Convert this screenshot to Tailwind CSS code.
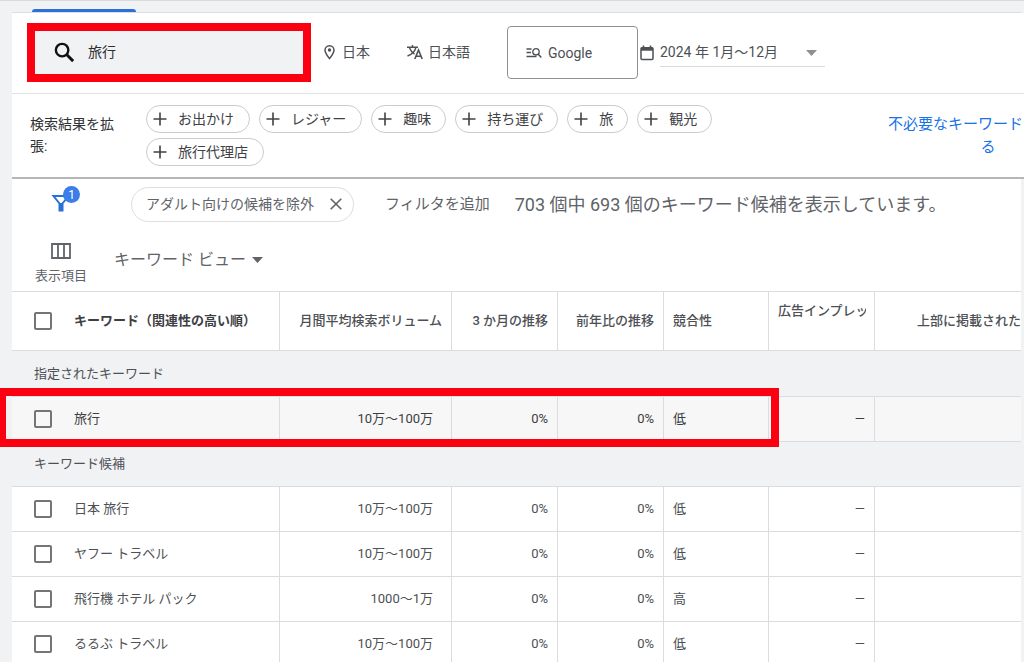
<!DOCTYPE html>
<html lang="ja">
<head>
<meta charset="utf-8">
<meta name="viewport" content="width=device-width, initial-scale=1">
<title>キーワード プランナー</title>
<script src="https://cdn.jsdelivr.net/npm/@tailwindcss/browser@4"></script>
</head>
<body class="h-screen overflow-hidden bg-[#f1f2f4] font-[Roboto,'Noto_Sans_CJK_JP',sans-serif] text-sm text-[#4d5054]">
<div class="flex min-h-full flex-col border-t border-[#d8dadd] pl-3 pr-[3px]">
  <div class="flex h-3 items-end border-b border-[#dcdee1] pl-5">
    <div class="h-[3px] w-[104px] rounded-t bg-[#2b70d8]"></div>
  </div>

  <!-- Search conditions -->
  <header class="-mr-[3px] flex h-[81px] items-center border-b border-[#dfe1e4] bg-white pb-px pl-[15px]">
    <form class="flex h-[59px] w-[284px] shrink-0 items-center gap-3 border-8 border-[#fb0010] bg-[#f1f2f4] pb-px pl-[18px]">
      <svg class="size-[23px] text-[#111]" viewBox="0 0 24 24" fill="none" stroke="currentColor" stroke-width="2.5" aria-hidden="true"><circle cx="9.500" cy="9.500" r="6.500"/><path d="M14.200 14.200 21 21" stroke-width="3"/></svg>
      <input type="text" aria-label="キーワード" value="旅行" class="w-40 min-w-0 bg-transparent text-[#2b2d30] outline-none">
    </form>
    <button type="button" class="ml-3 flex shrink-0 items-center gap-1.5 pb-px">
      <svg class="h-4 w-[13px]" viewBox="0 0 13 16" fill="none" stroke="currentColor" stroke-width="1.500" aria-hidden="true"><path d="M6.500 14.600C4 11.400 2 9 2 6.200a4.500 4.500 0 0 1 9 0c0 2.800-2 5.200-4.500 8.400Z"/><circle cx="6.500" cy="6" r="1.700" fill="currentColor" stroke="none"/></svg>
      日本
    </button>
    <button type="button" class="ml-9 flex shrink-0 items-center gap-1 pb-px">
      <svg class="h-4 w-[18px]" viewBox="0 0 18 16" fill="none" stroke="currentColor" stroke-width="1.400" aria-hidden="true"><path d="M1 3.200h11M6.500 1v2.200M10 3.200C9 7 5.500 10.500 1.500 12M3.300 3.500C4.500 6.500 6 8.500 8.500 10.200"/><path d="m8.800 15 3.700-9 3.700 9M10 12.200h5" stroke-width="1.600"/></svg>
      日本語
    </button>
    <button type="button" class="ml-[37px] flex h-[53px] w-[131px] shrink-0 items-center gap-1.5 rounded border border-[#8d9195] pl-[18px]">
      <svg class="h-3 w-4 shrink-0" viewBox="0 0 16 12" fill="none" stroke="currentColor" stroke-width="1.300" aria-hidden="true"><path d="M0.500 2h5M0.500 5.500h4.500M0.500 9.500h10"/><circle cx="10" cy="4.800" r="3.200"/><path d="m12.300 7.200 3 3.300" stroke-width="1.500"/></svg>
      Google
    </button>
    <svg class="ml-0.5 h-4 w-[14px] shrink-0" viewBox="0 0 14 16" fill="none" stroke="currentColor" aria-hidden="true"><rect x="1" y="2.800" width="12" height="11.700" rx="1" stroke-width="1.500"/><path d="M1 4.200h12" stroke-width="3"/><path d="M3.500 0.500v3M10.500 0.500v3" stroke-width="1.600"/></svg>
    <div class="relative ml-1.5 w-[165px] shrink-0 border-b border-[#d9dbde]">
      <select aria-label="期間" class="h-7 w-full appearance-none bg-transparent outline-none"><option>2024 年 1月〜12月</option></select>
      <svg class="pointer-events-none absolute right-2 top-3 h-[6px] w-[11px]" viewBox="0 0 11 6" fill="#8d9093" aria-hidden="true"><path d="M0 0h11L5.500 6z"/></svg>
    </div>
  </header>

  <!-- Suggested broader terms -->
  <section class="-mr-[3px] flex h-[85px] items-start overflow-hidden border-b-2 border-[#b5b6b8] bg-white pl-[18px] pt-[11px]">
    <p class="mt-2 w-[88px] shrink-0 leading-[22px] text-[#2f3134]">検索結果を拡張:</p>
    <div class="ml-7 flex w-[660px] shrink-0 flex-wrap gap-x-[9px] gap-y-[5px] text-[#3f4246]">
      <button type="button" class="flex h-7 items-center gap-[11px] rounded-full border border-[#c9cbce] pb-px pl-1.5 pr-[15px]"><svg class="size-3.5" viewBox="0 0 14 14" stroke="currentColor" stroke-width="1.600" aria-hidden="true"><path d="M7 .5v13M.5 7h13"/></svg>お出かけ</button>
      <button type="button" class="flex h-7 items-center gap-[11px] rounded-full border border-[#c9cbce] pb-px pl-1.5 pr-[15px]"><svg class="size-3.5" viewBox="0 0 14 14" stroke="currentColor" stroke-width="1.600" aria-hidden="true"><path d="M7 .5v13M.5 7h13"/></svg>レジャー</button>
      <button type="button" class="flex h-7 items-center gap-[11px] rounded-full border border-[#c9cbce] pb-px pl-1.5 pr-3.5"><svg class="size-3.5" viewBox="0 0 14 14" stroke="currentColor" stroke-width="1.600" aria-hidden="true"><path d="M7 .5v13M.5 7h13"/></svg>趣味</button>
      <button type="button" class="flex h-7 items-center gap-[11px] rounded-full border border-[#c9cbce] pb-px pl-1.5 pr-3.5"><svg class="size-3.5" viewBox="0 0 14 14" stroke="currentColor" stroke-width="1.600" aria-hidden="true"><path d="M7 .5v13M.5 7h13"/></svg>持ち運び</button>
      <button type="button" class="flex h-7 items-center gap-[11px] rounded-full border border-[#c9cbce] pb-px pl-1.5 pr-3.5"><svg class="size-3.5" viewBox="0 0 14 14" stroke="currentColor" stroke-width="1.600" aria-hidden="true"><path d="M7 .5v13M.5 7h13"/></svg>旅</button>
      <button type="button" class="flex h-7 items-center gap-[11px] rounded-full border border-[#c9cbce] pb-px pl-1.5 pr-3.5"><svg class="size-3.5" viewBox="0 0 14 14" stroke="currentColor" stroke-width="1.600" aria-hidden="true"><path d="M7 .5v13M.5 7h13"/></svg>観光</button>
      <button type="button" class="flex h-7 items-center gap-[11px] rounded-full border border-[#c9cbce] pb-px pl-1.5 pr-[15px]"><svg class="size-3.5" viewBox="0 0 14 14" stroke="currentColor" stroke-width="1.600" aria-hidden="true"><path d="M7 .5v13M.5 7h13"/></svg>旅行代理店</button>
    </div>
    <a href="#" class="ml-auto mt-2 w-[136px] shrink-0 whitespace-nowrap text-[15px] leading-[23px] text-[#1a73e8]"><span class="block">不必要なキーワード</span><span class="block w-[200px] text-center">る</span></a>
  </section>

  <!-- Filter bar and view options -->
  <section class="h-28 bg-white pt-[7px] text-[#606368]">
    <div class="flex h-9 items-center">
      <button type="button" aria-label="フィルタ" class="relative ml-[39px] h-7 w-[30px] shrink-0">
        <svg class="mb-0.5 h-[18px] w-5" viewBox="0 0 20 18" fill="none" stroke="#2b70d8" stroke-width="2" aria-hidden="true"><path d="M2.500 2h15L11.500 9.500v7h-3v-7z"/><path d="M10 9v8" stroke-width="3"/></svg>
        <span class="absolute -top-1 left-3 flex size-[17px] items-center justify-center rounded-full bg-[#3b7de9] text-xs text-white">1</span>
      </button>
      <div class="ml-[50px] flex h-[35px] w-[223px] shrink-0 items-center justify-between rounded-full border border-[#dcdee0] pl-3.5 pr-[11px]">
        <span>アダルト向けの候補を除外</span>
        <button type="button" aria-label="削除"><svg class="size-3" viewBox="0 0 12 12" stroke="currentColor" stroke-width="1.600" aria-hidden="true"><path d="m.7.7 10.600 10.600M11.300.7.7 11.300"/></svg></button>
      </div>
      <button type="button" class="ml-[31px] shrink-0 pt-0.5 text-[15px]">フィルタを追加</button>
      <p class="ml-[25px] shrink-0 whitespace-nowrap pt-px text-lg">703 個中 693 個のキーワード候補を表示しています。</p>
    </div>
    <div class="mt-5 flex items-start">
      <button type="button" class="ml-[22px] flex w-[54px] flex-col items-center text-[13px] leading-5">
        <svg class="mb-[7px] mt-px h-4 w-5" viewBox="0 0 20 16" fill="none" stroke="currentColor" stroke-width="1.800" aria-hidden="true"><path d="M1 1h18v14H1zM7 1v14M13 1v14"/></svg>
        表示項目
      </button>
      <button type="button" class="ml-[26px] mt-1.5 flex items-center gap-1.5 text-base leading-6">
        キーワード ビュー
        <svg class="h-[6px] w-[11px]" viewBox="0 0 11 6" fill="currentColor" aria-hidden="true"><path d="M0 0h11L5.500 6z"/></svg>
      </button>
    </div>
  </section>

  <table class="w-full table-fixed border-separate border-spacing-0 text-[13px] leading-5">
    <colgroup><col class="w-[268px]"><col class="w-[172px]"><col class="w-[106px]"><col class="w-[106px]"><col class="w-[105px]"><col class="w-[106px]"><col></colgroup>
    <thead class="[&_th]:h-[60px] [&_th]:border-y [&_th]:border-[#dadce0] [&_th]:bg-white [&_th]:p-0 [&_th]:font-medium [&_th:not(:last-child)]:border-r">
      <tr>
        <th scope="col" class="text-left"><label class="flex items-center gap-[22px] pl-[22px] font-bold text-[#3c4043]"><input type="checkbox" class="size-[18px] appearance-none rounded-xs border-2 border-[#737577]">キーワード（関連性の高い順）</label></th>
        <th scope="col" class="text-right"><span class="pr-[9px]">月間平均検索ボリューム</span></th>
        <th scope="col" class="text-right"><span class="pr-[9px]">3 か月の推移</span></th>
        <th scope="col" class="text-right"><span class="pr-[9px]">前年比の推移</span></th>
        <th scope="col" class="text-left"><span class="pl-[9px]">競合性</span></th>
        <th scope="col" class="text-left align-top"><span class="ml-[9px] mr-2 mt-[9px] block overflow-hidden whitespace-nowrap">広告インプレッ</span></th>
        <th scope="col" class="text-right">上部に掲載された</th>
      </tr>
    </thead>
    <tbody class="[&_th]:h-[46px] [&_th]:border-b [&_th]:border-[#dadce0] [&_th]:pl-[22px] [&_th]:text-left [&_th]:font-normal [&_td]:h-[45px] [&_td]:border-b [&_td]:border-[#dadce0] [&_td]:bg-[#f7f7f7] [&_td]:p-0 [&_td]:pr-[9px] [&_td]:text-right [&_td:not(:last-child)]:border-r">
      <tr><th colspan="7" scope="rowgroup">指定されたキーワード</th></tr>
      <tr class="text-[#3c4043]">
        <td class="relative"><label class="flex items-center gap-[22px] pl-[22px]"><input type="checkbox" class="size-[18px] appearance-none rounded-xs border-2 border-[#737577]">旅行</label><div class="pointer-events-none absolute -left-3.5 -top-[9px] z-10 h-[59px] w-[781px] border-8 border-[#fb0010]"></div></td>
        <td><span class="pr-[9px]">10万〜100万</span></td><td>0%</td><td>0%</td><td><span class="block pl-[9px] text-left">低</span></td><td>—</td><td></td>
      </tr>
    </tbody>
    <tbody class="[&_th]:h-[45px] [&_th]:border-b [&_th]:border-[#dadce0] [&_th]:pl-[22px] [&_th]:text-left [&_th]:font-normal [&_td]:h-[45px] [&_td]:border-b [&_td]:border-[#dadce0] [&_td]:bg-white [&_td]:p-0 [&_td]:pr-[9px] [&_td]:text-right [&_td:not(:last-child)]:border-r">
      <tr><th colspan="7" scope="rowgroup">キーワード候補</th></tr>
      <tr>
        <td><label class="flex items-center gap-[22px] pl-[22px]"><input type="checkbox" class="size-[18px] appearance-none rounded-xs border-2 border-[#737577]">日本 旅行</label></td>
        <td><span class="pr-[9px]">10万〜100万</span></td><td>0%</td><td>0%</td><td><span class="block pl-[9px] text-left">低</span></td><td>—</td><td></td>
      </tr>
      <tr>
        <td><label class="flex items-center gap-[22px] pl-[22px]"><input type="checkbox" class="size-[18px] appearance-none rounded-xs border-2 border-[#737577]">ヤフー トラベル</label></td>
        <td><span class="pr-[9px]">10万〜100万</span></td><td>0%</td><td>0%</td><td><span class="block pl-[9px] text-left">低</span></td><td>—</td><td></td>
      </tr>
      <tr>
        <td><label class="flex items-center gap-[22px] pl-[22px]"><input type="checkbox" class="size-[18px] appearance-none rounded-xs border-2 border-[#737577]">飛行機 ホテル パック</label></td>
        <td><span class="pr-[9px]">1000〜1万</span></td><td>0%</td><td>0%</td><td><span class="block pl-[9px] text-left">高</span></td><td>—</td><td></td>
      </tr>
      <tr>
        <td><label class="flex items-center gap-[22px] pl-[22px]"><input type="checkbox" class="size-[18px] appearance-none rounded-xs border-2 border-[#737577]">るるぶ トラベル</label></td>
        <td><span class="pr-[9px]">10万〜100万</span></td><td>0%</td><td>0%</td><td><span class="block pl-[9px] text-left">低</span></td><td>—</td><td></td>
      </tr>
    </tbody>
  </table>
</div>
</body>
</html>
